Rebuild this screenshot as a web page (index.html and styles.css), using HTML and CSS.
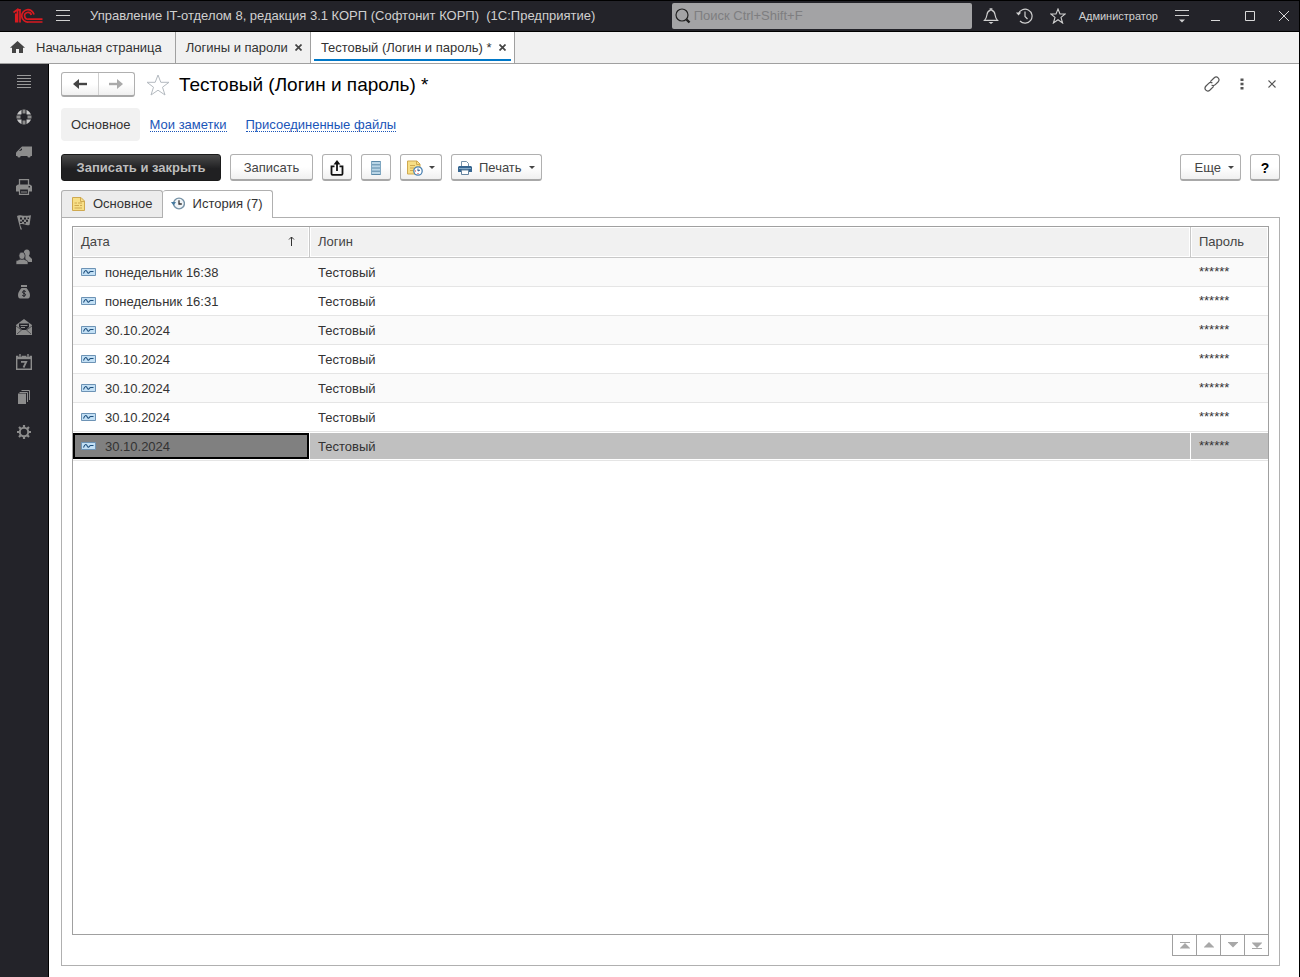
FILE: index.html
```html
<!DOCTYPE html>
<html lang="ru">
<head>
    <meta charset="UTF-8">
    <meta name="viewport" content="width=device-width, initial-scale=1.0">
    <title>Тестовый (Логин и пароль) *</title>
    <link rel="stylesheet" href="styles.css">
</head>
<body>
    <header class="topbar">
        <svg class="logo" width="30" height="16" viewBox="0 0 30 16" fill="none" stroke="#d91a20" stroke-width="1.7">
            <path d="M0.5 4.5 L4.5 1.5 V14.5 M2.8 5.5 V14.5 M7 14.5 V1.8 H4.5"/>
            <path d="M21 6.5 A6.2 6.2 0 1 0 15.5 14 H29.5"/>
            <path d="M18.3 7 A3.4 3.4 0 1 0 15.5 11.2 H29.5"/>
        </svg>
        <button class="bar-button menu-button" aria-label="Меню">
            <svg width="14" height="12" viewBox="0 0 14 12" stroke="#d0d0d0"><path d="M0 .5H14M0 5.5H14M0 10.5H14"/></svg>
        </button>
        <div class="app-title">Управление IT-отделом 8, редакция 3.1 КОРП (Софтонит КОРП)&nbsp; (1С:Предприятие)</div>
        <label class="search">
            <svg width="16" height="16" viewBox="0 0 16 16" fill="none" stroke="#222"><circle cx="7" cy="7" r="6" stroke-width="1.2"/><path d="M11.5 11.5L14.5 14.5" stroke-width="2.4"/></svg>
            <input type="text" placeholder="Поиск Ctrl+Shift+F" aria-label="Поиск">
        </label>
        <div class="bar-actions">
            <button class="bar-button" aria-label="Уведомления">
                <svg width="16" height="18" viewBox="0 0 16 18" fill="none" stroke="#d0d0d0" stroke-width="1.2"><path d="M1.5 13.4H14.5C12.5 11.5 12.4 10 12 7.5C11.6 5 10.5 3.8 8.8 3.4V1.8H7.2V3.4C5.5 3.8 4.4 5 4 7.5C3.6 10 3.5 11.5 1.5 13.4Z"/><path d="M5.5 15H10.5L8 17Z" fill="#d0d0d0" stroke="none"/></svg>
            </button>
            <button class="bar-button" aria-label="История">
                <svg width="17" height="16" viewBox="0 0 17 16" fill="none" stroke="#d0d0d0" stroke-width="1.2"><path d="M2.4 6A7 7 0 1 1 4 13"/><path d="M9 3.5V8.5L11.5 11"/><path d="M0 4.5H5.2L2.5 7.5Z" fill="#d0d0d0" stroke="none"/></svg>
            </button>
            <button class="bar-button" aria-label="Избранное">
                <svg width="16" height="16" viewBox="0 0 16 16" fill="none" stroke="#d0d0d0" stroke-width="1.1"><path d="M8 1L10 6H15.2L11 9.4L12.6 15L8 11.7L3.4 15L5 9.4L.8 6H6Z"/></svg>
            </button>
            <a class="user" href="#">Администратор</a>
            <button class="bar-button" aria-label="Настройки">
                <svg width="14" height="14" viewBox="0 0 14 14" stroke="#d0d0d0"><path d="M0 1.5H14M0 6.5H14"/><path d="M4 10.5H10L7 13.5Z" fill="#d0d0d0" stroke="none"/></svg>
            </button>
        </div>
        <div class="window-actions">
            <button class="bar-button" aria-label="Свернуть"><svg width="10" height="10" viewBox="0 0 10 10" stroke="#d8d8d8"><path d="M0 9.5H9"/></svg></button>
            <button class="bar-button" aria-label="Развернуть"><svg width="10" height="10" viewBox="0 0 10 10" fill="none" stroke="#d8d8d8"><path d="M.5 .5H9.5V9.5H.5Z"/></svg></button>
            <button class="bar-button" aria-label="Закрыть"><svg width="10" height="10" viewBox="0 0 10 10" stroke="#d8d8d8"><path d="M0 0L10 10M10 0L0 10"/></svg></button>
        </div>
    </header>

    <nav class="window-tabs">
        <a class="window-tab home" href="#">
            <svg width="15" height="14" viewBox="0 0 15 14" fill="#444"><path d="M7.5 0L15 6.8H13V12H9V8H6V12H2V6.8H0Z"/></svg>
            Начальная страница
        </a>
        <div class="window-tab">
            <a href="#">Логины и пароли</a>
            <button class="tab-close" aria-label="Закрыть"><svg width="7" height="7" viewBox="0 0 7 7" stroke="#444" stroke-width="1.7"><path d="M.5 .5L6.5 6.5M6.5 .5L.5 6.5"/></svg></button>
        </div>
        <div class="window-tab active">
            <a href="#">Тестовый (Логин и пароль) *</a>
            <button class="tab-close" aria-label="Закрыть"><svg width="7" height="7" viewBox="0 0 7 7" stroke="#444" stroke-width="1.7"><path d="M.5 .5L6.5 6.5M6.5 .5L.5 6.5"/></svg></button>
        </div>
    </nav>

    <div class="workspace">
        <nav class="sidebar">
            <a href="#" aria-label="Главное"><svg width="16" height="16" viewBox="0 0 16 16" stroke="#999"><path d="M1 1.5H15M1 4.5H15M1 7.5H15M1 10.5H15M1 13.5H15"/></svg></a>
            <a href="#" aria-label="Поддержка"><svg width="16" height="16" viewBox="0 0 16 16" fill="none"><circle cx="8" cy="8" r="5.4" stroke="#c8c8c8" stroke-width="4"/><path d="M8 0V5.5M8 10.5V16M0 8H5.5M10.5 8H16" stroke="#232329" stroke-width="5"/><path d="M8 .5V4.5M8 11.5V15.5M.5 8H4.5M11.5 8H15.5" stroke="#8c8c8c" stroke-width="3"/></svg></a>
            <a href="#" aria-label="Поставки"><svg width="16" height="16" viewBox="0 0 16 16" fill="#8c8c8c"><path d="M0 8.5L5 3.5L6 2.5H16V12H0Z"/><path d="M3 7L5.5 4.5H6V6L4 7Z" fill="#232329"/><circle cx="3" cy="12" r="1.6"/><circle cx="13" cy="12" r="1.6"/></svg></a>
            <a href="#" aria-label="Печать"><svg width="16" height="16" viewBox="0 0 16 16"><path d="M3.5 6V.7H12.5V6" fill="none" stroke="#8c8c8c" stroke-width="1.3"/><path d="M2 5.5H14L16 7V12.5H0V7Z" fill="#8c8c8c"/><path d="M3.5 10H12.5V15.3H3.5Z" fill="#232329" stroke="#8c8c8c" stroke-width="1.2"/><path d="M5 13H11" stroke="#8c8c8c"/><path d="M12.5 7H14V8.5H12.5Z" fill="#232329"/></svg></a>
            <a href="#" aria-label="Проекты"><svg width="16" height="16" viewBox="0 0 16 16"><path d="M1 2C4 0 6 3 15 1.2L13.5 11C9 12 8 9 4 10.5L6 15.5H4.5Z" fill="#8c8c8c"/><path d="M4 3.5H6V5.5H4ZM8 3.5H10V5.5H8ZM11.5 3.5H13V5H11.5ZM6 5.7H8V7.7H6ZM10 5.7H12V7.7H10ZM4 7.5H6V9H4ZM8 8H10V9.5H8Z" fill="#232329"/></svg></a>
            <a href="#" aria-label="Сотрудники"><svg width="16" height="16" viewBox="0 0 16 16" fill="#8c8c8c"><ellipse cx="10.8" cy="4" rx="3" ry="3.5"/><path d="M9 7H13L16 10V13H10Z"/><g stroke="#232329" stroke-width=".7"><path d="M0 15.5V12.5C0 11 4 11 4 10H8C8 11 12 11 12 13V15.5Z"/><ellipse cx="6" cy="6.8" rx="3.1" ry="3.7"/></g></svg></a>
            <a href="#" aria-label="Финансы"><svg width="16" height="16" viewBox="0 0 16 16"><path d="M5 1H11V3H5ZM5.5 4H10.5C12 6 14 8 14 11C14 13.5 13 14.5 12 14.5H4C3 14.5 2 13.5 2 11C2 8 4 6 5.5 4Z" fill="#8c8c8c"/><path d="M9.8 7.6C9 6.6 6.4 6.8 6.5 8.2C6.6 9.8 9.6 9 9.6 10.8C9.5 12.3 7 12.3 6.2 11.2M8 6V13" fill="none" stroke="#232329"/></svg></a>
            <a href="#" aria-label="Почта"><svg width="16" height="16" viewBox="0 0 16 16"><path d="M0 6L8 0L16 6V16H0Z" fill="#8c8c8c"/><path d="M3 4.5H13V8L10 11H6L3 8Z" fill="#232329"/><path d="M4.5 6.5H11.5M5 8.5H9" stroke="#8c8c8c"/><path d="M0 7L5.5 11L1 15M16 7L10.5 11L15 15" fill="none" stroke="#232329" stroke-width=".6"/></svg></a>
            <a href="#" aria-label="Календарь"><svg width="16" height="16" viewBox="0 0 16 16" fill="none" stroke="#8c8c8c"><path d="M.7 2.5H15.3V15.3H.7Z" stroke-width="1.4"/><path d="M0 3.7H16" stroke-width="3"/><path d="M4 0V3M12 0V3" stroke="#232329" stroke-width="3"/><path d="M4 0V3.5M12 0V3.5" stroke-width="1.4"/><path d="M5 7.8H10.2L7.5 13.5" stroke-width="1.8"/></svg></a>
            <a href="#" aria-label="Документы"><svg width="16" height="16" viewBox="0 0 16 16"><path d="M2 4.5H10V15H2Z" fill="#8c8c8c"/><path d="M3.5 3.5H11.5V13M5.5 1.5H13.5V11" fill="none" stroke="#8c8c8c"/></svg></a>
            <a href="#" aria-label="Администрирование"><svg width="16" height="16" viewBox="0 0 16 16" fill="none" stroke="#8c8c8c"><circle cx="8" cy="8" r="4.2" stroke-width="2"/><path d="M8 1V4M8 12V15M1 8H4M12 8H15M3 3L5.2 5.2M10.8 10.8L13 13M13 3L10.8 5.2M5.2 10.8L3 13" stroke-width="2.2"/></svg></a>
        </nav>

        <main class="form">
            <div class="form-header">
                <div class="history-nav">
                    <button aria-label="Назад"><svg width="14" height="10" viewBox="0 0 14 10"><path d="M3 5H14" stroke="#444" stroke-width="2.4"/><path d="M0 5L6 0V10Z" fill="#444"/></svg></button>
                    <button aria-label="Вперед"><svg width="14" height="10" viewBox="0 0 14 10"><path d="M0 5H11" stroke="#aaa" stroke-width="2.4"/><path d="M14 5L8 0V10Z" fill="#aaa"/></svg></button>
                </div>
                <button class="plain-button" aria-label="В избранное">
                    <svg width="24" height="22" viewBox="0 0 24 22" fill="none" stroke="#b4bac0"><path d="M12 1L14.8 8.3H23L16.5 13.2L19 21L12 16.2L5 21L7.5 13.2L1 8.3H9.2Z"/></svg>
                </button>
                <h1>Тестовый (Логин и пароль) *</h1>
                <div class="form-actions">
                    <button class="plain-button" aria-label="Получить ссылку"><svg width="16" height="16" viewBox="0 0 16 16" fill="none" stroke="#555" stroke-width="1.2"><path d="M6.3 5.7L10 2C13-.7 16.7 3 14 6L11.3 8.7C10.3 9.7 8.7 9.8 7.6 9"/><path d="M9.7 10.3L6 14C3 16.7-.7 13 2 10L4.7 7.3C5.7 6.3 7.3 6.2 8.4 7"/></svg></button>
                    <button class="plain-button" aria-label="Действия"><svg width="4" height="12" viewBox="0 0 4 12" fill="#555"><path d="M.5 .5H3.5V3H.5ZM.5 4.7H3.5V7.2H.5ZM.5 9H3.5V11.5H.5Z"/></svg></button>
                    <button class="plain-button" aria-label="Закрыть"><svg width="8" height="8" viewBox="0 0 8 8" stroke="#555" stroke-width="1.1"><path d="M.5 .5L7.5 7.5M7.5 .5L.5 7.5"/></svg></button>
                </div>
            </div>

            <nav class="form-links">
                <span class="current">Основное</span>
                <a href="#">Мои заметки</a>
                <a href="#">Присоединенные файлы</a>
            </nav>

            <div class="toolbar">
                <button class="button primary">Записать и закрыть</button>
                <button class="button save">Записать</button>
                <button class="button icon-only" aria-label="Выгрузить">
                    <svg width="14" height="16" viewBox="0 0 14 16" fill="none" stroke="#111" stroke-width="1.8"><path d="M4.5 6.3H1.5V13.8Q1.5 14.8 2.5 14.8H11.5Q12.5 14.8 12.5 13.8V6.3H9.5M7 11V3"/><path d="M3.5 4.5L7 0L10.5 4.5Z" fill="#111" stroke="none"/></svg>
                </button>
                <button class="button icon-only" aria-label="Список">
                    <svg width="10" height="14" viewBox="0 0 10 14"><path d="M0 0H10V14H0Z" fill="#b9d5e6"/><path d="M0 .5H10M0 3.8H10M0 7H10M0 10.2H10M0 13.5H10" stroke="#5b89a8"/><path d="M.5 0V14M9.5 0V14" stroke="#7fa7c1"/></svg>
                </button>
                <button class="button with-menu" aria-label="Напоминание">
                    <svg width="16" height="16" viewBox="0 0 16 16"><path d="M.5 1H10L13 4V14H.5Z" fill="#f7df86" stroke="#cfa950"/><path d="M9.5 1V4.5H13M3 5.5H8M3 8H7M3 10.5H6" fill="none" stroke="#cfa950"/><circle cx="11" cy="11" r="4.2" fill="#fff" stroke="#4a80b0" stroke-width="1.3"/><path d="M11 8.5V11L13 10" stroke="#245a90" fill="none"/><path d="M11 13V14M8 11H9" stroke="#d33"/></svg>
                    <span class="caret"></span>
                </button>
                <button class="button with-menu">
                    <svg width="14" height="14" viewBox="0 0 14 14"><path d="M3.5 6V.5H8.5L10.5 2.5V6" fill="#fff" stroke="#7893aa"/><path d="M1 5H13L14 6V11H0V6Z" fill="#376691"/><path d="M1 7.5H13" stroke="#82a9c8"/><path d="M3.5 9H10.5V13.5H3.5Z" fill="#fff" stroke="#6785a0"/></svg>
                    <span class="button-text">Печать</span>
                    <span class="caret"></span>
                </button>
                <span class="spacer"></span>
                <button class="button with-menu more"><span class="button-text">Еще</span><span class="caret"></span></button>
                <button class="button icon-only help">?</button>
            </div>

            <div class="page-tabs">
                <button class="page-tab">
                    <svg width="13" height="14" viewBox="0 0 13 14"><path d="M.5 .5H9L12.5 4V13.5H.5Z" fill="#f7df86" stroke="#cfa950"/><path d="M8.5 .5V4.5H12.5M2.5 6H5M6 6H10M2.5 8.5H7M8 8.5H10M2.5 11H10" fill="none" stroke="#cfa950"/></svg>
                    Основное
                </button>
                <button class="page-tab active">
                    <svg width="14" height="13" viewBox="0 0 14 13" fill="none"><circle cx="8" cy="6.5" r="5.4" fill="#f0f4f7" stroke="#7692a6" stroke-width="1.4"/><path d="M8 3.2V7H10.8" stroke="#333" stroke-width="1.3"/><path d="M0 5H5L2.5 8.5Z" fill="#45799f"/></svg>
                    История (7)
                </button>
            </div>

            <section class="page">
                <div class="grid">
                    <table>
                        <colgroup><col class="col-date"><col><col class="col-password"></colgroup>
                        <thead>
                            <tr>
                                <th><span class="sorted">Дата <svg width="7" height="12" viewBox="0 0 7 12" fill="none" stroke="#333"><path d="M3.5 10V1M1 3.5L3.5 1L6 3.5"/></svg></span></th>
                                <th>Логин</th>
                                <th>Пароль</th>
                            </tr>
                        </thead>
                        <tbody id="historyRows"></tbody>
                    </table>
                </div>
                <div class="pager">
                    <button aria-label="В начало"><svg width="10" height="7" viewBox="0 0 10 7" fill="#a8a8a8"><path d="M0 0H10V1H0ZM5 1L10 6V6.5H0V6Z"/></svg></button>
                    <button aria-label="Вверх"><svg width="10" height="6" viewBox="0 0 10 6" fill="#a8a8a8"><path d="M5 0L10 5V5.5H0V5Z"/></svg></button>
                    <button aria-label="Вниз"><svg width="10" height="6" viewBox="0 0 10 6" fill="#a8a8a8"><path d="M5 5.5L10 .5V0H0V.5Z"/></svg></button>
                    <button aria-label="В конец"><svg width="10" height="7" viewBox="0 0 10 7" fill="#a8a8a8"><path d="M0 6H10V7H0ZM5 6L10 1V.5H0V1Z"/></svg></button>
                </div>
            </section>
        </main>
    </div>

    <script>
        const dates = ['понедельник 16:38', 'понедельник 16:31', '30.10.2024', '30.10.2024', '30.10.2024', '30.10.2024', '30.10.2024'];
        const recordIcon = '<svg width="15" height="8" viewBox="0 0 15 8" fill="none"><path d="M.5 .5H14.5V7.5H.5Z" fill="#c3e0f5" stroke="#6d93b5"/><path d="M2.5 5.5C4 1.5 5.5 2 6.5 4.5C7.5 6.5 8.5 3.5 9.5 3.5H12.5" stroke="#1d4f7d" stroke-width="1.1"/></svg>';

        document.getElementById('historyRows').innerHTML = dates.map((date, i) => `
            <tr class="${i === dates.length - 1 ? 'selected' : ''}">
                <td>${recordIcon}<span class="date">${date}</span></td>
                <td>Тестовый</td>
                <td class="password">******</td>
            </tr>`).join('');
    </script>
</body>
</html>
```
FILE: styles.css
```css
* {
    box-sizing: border-box;
}
body {
    margin: 0;
    height: 100vh;
    display: flex;
    flex-direction: column;
    border-right: 1px solid #000;
    background: #fff;
    color: #333;
    font-family: "Liberation Sans", Arial, sans-serif;
    font-size: 13px;
    line-height: 16px;
}
button, input {
    font: inherit;
    color: inherit;
}
button {
    padding: 0;
    border: none;
    background: none;
    cursor: pointer;
}
a {
    color: inherit;
    text-decoration: none;
}
svg {
    display: block;
    flex: none;
}

/* Title bar */
.topbar {
    display: flex;
    align-items: center;
    height: 32px;
    flex: none;
    padding-left: 13px;
    border-top: 1px solid #000;
    border-bottom: 1px solid #000;
    background: #232329;
    color: #d0d0d0;
}
.menu-button {
    margin: 0 20px 0 13px;
}
.app-title {
    flex: 1;
    white-space: nowrap;
    overflow: hidden;
}
.search {
    display: flex;
    align-items: center;
    gap: 3px;
    width: 300px;
    height: 26px;
    padding-left: 3px;
    border-radius: 2px;
    background: #a3a3a5;
}
.search input {
    flex: 1;
    min-width: 0;
    padding: 0;
    border: none;
    outline: none;
    background: none;
}
.search input::placeholder {
    color: #7e7e80;
    opacity: 1;
}
.bar-actions {
    display: flex;
    align-items: center;
    gap: 17px;
    margin-left: 11px;
}
.user {
    margin-left: -4px;
    font-size: 11px;
}
.window-actions {
    display: flex;
    gap: 24px;
    margin: 0 10px 0 22px;
}

/* Open windows */
.window-tabs {
    display: flex;
    flex: none;
    height: 32px;
    border-bottom: 1px solid #a0a0a0;
    background: #f1f1f1;
}
.window-tab {
    display: flex;
    align-items: center;
    gap: 7px;
    padding: 0 8px 0 10px;
    border-right: 1px solid #a0a0a0;
    white-space: nowrap;
}
.window-tab.home {
    gap: 11px;
    padding-right: 13px;
}
.window-tab.active {
    background: linear-gradient(#0078c8, #0078c8) center bottom 2px / calc(100% - 6px) 2px no-repeat #fff;
}

.workspace {
    display: flex;
    flex: 1;
    min-height: 0;
}
.sidebar {
    flex: none;
    width: 49px;
    border-right: 1px solid #000;
    background: #232329;
}
.sidebar a {
    display: flex;
    align-items: center;
    justify-content: center;
    height: 35px;
}

/* Form */
.form {
    display: flex;
    flex: 1;
    flex-direction: column;
    min-width: 0;
    padding: 8px 19px 11px 12px;
}
.form-header {
    display: flex;
    align-items: center;
    height: 25px;
}
.history-nav {
    display: flex;
    width: 74px;
    height: 25px;
    margin-right: 11px;
    border: 1px solid #b0b0b0;
    border-bottom: 2px solid #a8a8a8;
    border-radius: 3px;
    background: linear-gradient(#fff 50%, #f0f0f0);
}
.history-nav button {
    display: flex;
    flex: 1;
    align-items: center;
    justify-content: center;
}
.history-nav button + button {
    border-left: 1px solid #d0d0d0;
}
h1 {
    flex: 1;
    margin: 0 0 0 9px;
    color: #000;
    font-size: 19px;
    font-weight: normal;
    line-height: 24px;
}
.form-actions {
    display: flex;
    align-items: center;
    gap: 14px;
}
.form-actions button {
    display: flex;
    align-items: center;
    justify-content: center;
    width: 16px;
    height: 16px;
    margin-bottom: 2px;
}
.form-links {
    display: flex;
    align-items: center;
    gap: 19px;
    margin-top: 11px;
}
.form-links .current {
    margin-right: -9px;
    padding: 9px 9px 8px 10px;
    border-radius: 4px;
    background: #f1f1f1;
}
.form-links a {
    padding-top: 2px;
    border-bottom: 1px dotted #1a55b8;
    color: #1a55b8;
    line-height: 12px;
}

/* Commands */
.toolbar {
    display: flex;
    gap: 9px;
    margin-top: 13px;
}
.button {
    display: flex;
    align-items: center;
    justify-content: center;
    height: 27px;
    padding-top: 1px;
    border: 1px solid #b0b0b0;
    border-bottom: 2px solid #a8a8a8;
    border-radius: 3px;
    background: linear-gradient(#fff 50%, #f0f0f0);
    color: #444;
}
.button.primary {
    width: 160px;
    padding-top: 0;
    border: 1px solid #1a1a1a;
    background: linear-gradient(#4a4a4a, #202022 55%);
    color: #bdbdbd;
    font-weight: bold;
}
.button.save {
    width: 83px;
}
.button.icon-only {
    width: 30px;
}
.button.with-menu {
    gap: 6px;
    padding: 1px 6px 0;
}
.button.more {
    padding-left: 13px;
}
.button-text {
    margin: 0 1px;
}
.button.help {
    color: #000;
    font-size: 14px;
    font-weight: bold;
}
.caret {
    border: 3px solid transparent;
    border-top-color: #444;
    border-bottom: none;
}
.spacer {
    flex: 1;
}

/* Form pages */
.page-tabs {
    display: flex;
    margin-top: 9px;
    height: 28px;
    z-index: 1;
}
.page-tab {
    display: flex;
    align-items: center;
    gap: 8px;
    height: 27px;
    padding: 0 9px 0 10px;
    border: 1px solid #b0b0b0;
    border-bottom: none;
    border-radius: 3px 3px 0 0;
    background: #ececec;
}
.page-tab.active {
    height: 28px;
    padding: 0 9px 2px 8px;
    border-left: none;
    background: #fff;
}
.page {
    display: flex;
    flex: 1;
    flex-direction: column;
    min-height: 0;
    margin-top: -1px;
    padding: 8px 10px 9px;
    border: 1px solid #b0b0b0;
}
.grid {
    flex: 1;
    min-height: 0;
    overflow: auto;
    border: 1px solid #a0a0a0;
}
table {
    width: 100%;
    table-layout: fixed;
    border-spacing: 0;
}
.col-date {
    width: 237px;
}
.col-password {
    width: 77px;
}
th, td {
    padding: 0 8px;
    text-align: left;
    white-space: nowrap;
}
th {
    height: 31px;
    border-right: 1px solid #c8c8c8;
    border-bottom: 1px solid #c8c8c8;
    background: #f1f1f1;
    box-shadow: inset 0 0 0 1px #fff;
    color: #444;
    font-weight: normal;
}
th:last-child {
    border-right: none;
}
.sorted {
    display: flex;
    align-items: center;
    justify-content: space-between;
    padding-right: 6px;
}
td {
    height: 29px;
    padding-top: 2px;
    border-bottom: 1px solid #e5e5e5;
}
tbody tr:nth-child(odd) {
    background: #fafafa;
}
td svg {
    display: inline-block;
    margin-right: 9px;
    vertical-align: 1px;
}
.password {
    line-height: 14px;
    padding-bottom: 2px;
}
tbody tr.selected {
    background: #c0c0c0;
}
.selected td {
    border-right: 1px solid #fff;
    box-shadow: inset 0 1px 0 #fff, inset 0 -1px 0 #fff;
}
.selected td:first-child {
    background: #808080;
    box-shadow: inset 0 1px 0 #fff, inset 0 -1px 0 #fff, inset 0 0 0 2px #000, inset 0 3px 0 #000, inset 0 -3px 0 #000;
}
.selected td:last-child {
    border-right: none;
}
.pager {
    display: flex;
    align-self: flex-end;
    margin-top: -1px;
    border: 1px solid #a0a0a0;
}
.pager button {
    display: flex;
    align-items: center;
    justify-content: center;
    width: 24px;
    height: 20px;
    border-right: 1px solid #a0a0a0;
}
.pager button:last-child {
    width: 23px;
    border-right: none;
}
```
